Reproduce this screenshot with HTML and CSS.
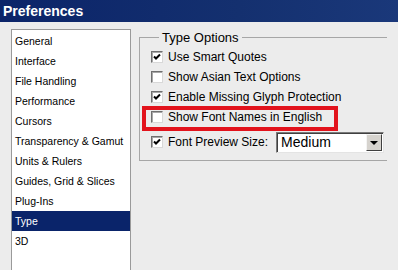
FILE: index.html
```html
<!DOCTYPE html>
<html>
  <head>
    <meta name="viewport" content="width=device-width, initial-scale=1.0" />
    <link rel="stylesheet" href="styles.css">
  </head>

  <body>
    <div class="title-bar">Preferences</div>

    <div class="dialog">
      <!--category list on the left-->
      <ul class="category-list">
        <li>General</li>
        <li>Interface</li>
        <li>File Handling</li>
        <li>Performance</li>
        <li>Cursors</li>
        <li>Transparency &amp; Gamut</li>
        <li>Units &amp; Rulers</li>
        <li>Guides, Grid &amp; Slices</li>
        <li>Plug-Ins</li>
        <li class="selected">Type</li>
        <li>3D</li>
      </ul>

      <fieldset class="options">
        <legend>Type Options</legend>

        <label class="option">
          <span class="check checked"></span>Use Smart Quotes
        </label>
        <label class="option">
          <span class="check"></span>Show Asian Text Options
        </label>
        <label class="option">
          <span class="check checked"></span>Enable Missing Glyph Protection
        </label>
        <label class="option marked">
          <span class="check"></span>Show Font Names in English
          <span class="mark"></span>
        </label>
        <div class="option size-row">
          <span class="check checked"></span>Font Preview Size:
          <div class="dropdown">
            <span class="dropdown-value">Medium</span>
            <span class="dropdown-button"></span>
          </div>
        </div>
      </fieldset>
    </div>
  </body>
</html>
```

FILE: styles.css
```css
body {
  margin: 0;
  background-color: #ececec;
  overflow: hidden;
}

/*window title*/
.title-bar {
  height: 22px;
  line-height: 22px;
  padding-left: 3px;
  background: linear-gradient(to right, #0b2469, #14306f 60%, #1a387a);
  color: #ffffff;
  font-family: "Liberation Sans", Arial, sans-serif;
  font-weight: bold;
  font-size: 14px;
}

.dialog {
  display: flex;
  align-items: flex-start;
  padding: 7px 0 0 11px;
  font-family: "Liberation Sans", Arial, sans-serif;
}

/*left list of categories*/
.category-list {
  list-style: none;
  margin: 0;
  padding: 1px 0 20px 0;
  width: 118px;
  height: 220px;
  flex-shrink: 0;
  background-color: #ffffff;
  border: 1px solid #9a9a9a;
  border-bottom: none;
  font-size: 10.5px;
  color: #000000;
}

.category-list li {
  height: 20px;
  line-height: 20px;
  padding-left: 3px;
  white-space: nowrap;
}

.category-list li.selected {
  background-color: #0a246a;
  color: #ffffff;
}

/*group box on the right*/
.options {
  margin: 1px 0 0 8px;
  padding: 2px 0 6px 11px;
  width: 236px;
  flex-shrink: 0;
  border: 1px solid #a6a6a6;
  border-right: none;
  font-size: 12px;
  color: #000000;
}

.options legend {
  margin-left: 8px;
  padding: 0 3px;
  font-size: 13px;
}

.option {
  position: relative;
  display: flex;
  align-items: center;
  height: 20px;
  white-space: nowrap;
}

.check {
  width: 10px;
  height: 10px;
  margin-right: 5px;
  background-color: #ffffff;
  border: 1px solid;
  border-color: #6f6f6f #d8d8d8 #d8d8d8 #6f6f6f;
  box-shadow: inset 1px 1px 0 #a8a8a8;
  flex-shrink: 0;
}

.check.checked {
  background: #ffffff url("data:image/svg+xml,%3Csvg xmlns='http://www.w3.org/2000/svg' width='10' height='10'%3E%3Cpath d='M2 4.5 L4 6.5 L8 2.5' fill='none' stroke='%23000' stroke-width='2'/%3E%3C/svg%3E") no-repeat center;
}

/*red annotation box round one option*/
.mark {
  position: absolute;
  left: -9px;
  top: -1px;
  width: 188px;
  height: 17px;
  border: 4px solid #e2131c;
}

.size-row {
  height: 24px;
  margin-top: 3px;
}

.dropdown {
  display: flex;
  align-items: center;
  width: 104px;
  height: 17px;
  margin-left: 8px;
  padding: 1px;
  background-color: #ffffff;
  border: 1px solid;
  border-color: #7a7a7a #e4e4e4 #e4e4e4 #7a7a7a;
  box-shadow: inset 1px 1px 0 #404040;
}

.dropdown-value {
  flex: 1;
  padding-left: 3px;
  font-size: 14px;
}

.dropdown-button {
  position: relative;
  width: 14px;
  height: 15px;
  background-color: #d6d3ce;
  border: 1px solid;
  border-color: #f4f4f4 #404040 #404040 #f4f4f4;
}

.dropdown-button:after {
  position: absolute;
  content: "";
  top: 6px;
  left: 3px;
  border: 4px solid transparent;
  border-top-color: #000000;
}
```
